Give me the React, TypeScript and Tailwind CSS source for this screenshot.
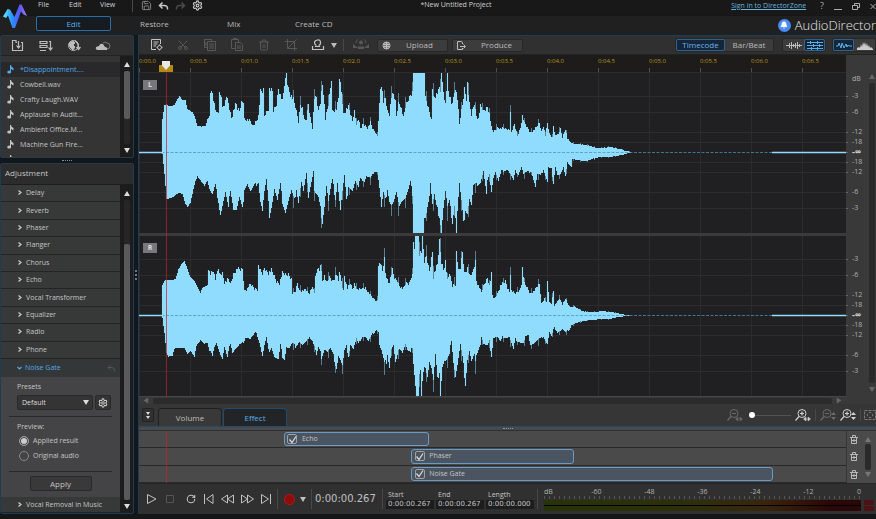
import type { ReactNode } from "react";
import { Bell, RotateCw, Save, Scissors, Settings, Trash2 } from "lucide-react";

const files = ["*Disappointment....", "Cowbell.wav", "Crafty Laugh.WAV", "Applause in Audit...", "Ambient Office.M...", "Machine Gun Fire...", "Gunshot 2..."];
const effects = ["Delay", "Reverb", "Phaser", "Flanger", "Chorus", "Echo", "Vocal Transformer", "Equalizer", "Radio", "Phone"];
const times = ["0:00.0", "0:00.5", "0:01.0", "0:01.5", "0:02.0", "0:02.5", "0:03.0", "0:03.5", "0:04.0", "0:04.5", "0:05.0", "0:05.5", "0:06.0", "0:06.5"];
const levels = ["-60", "-48", "-36", "-24", "-12"];

// distance from the previous mark, then the label
const dbMarks: [number, string][] = [[23, "-3"], [16, "-6"], [20, "-12"], [10, "-18"], [10, "-∞"], [10, "-18"], [10, "-12"], [20, "-6"], [16, "-3"]];

// wave envelopes in a 707x160 box
const leftTop =
  "23,79 23,46 25,33 27,32 29,34 35,33 38,27 40,24 43,28 46,28 48,37 53,40 55,44 58,53 62,54 66,54 68,47 70,44 71,17 73,18 75,30 77,40 79,37 80,20 82,20 83,34 86,27 87,22 89,29 92,44 95,34 96,26 98,35 100,37 102,28 104,27 105,45 111,47 113,52 117,47 119,42 121,17 124,16 125,42 129,34 130,14 133,17 134,37 137,30 139,14 140,17 143,27 145,10 147,1 149,14 151,20 154,25 157,37 159,47 161,30 163,34 165,47 167,45 169,30 171,44 173,54 175,24 177,23 179,37 181,27 183,9 184,17 186,45 189,30 192,5 193,37 197,35 199,24 200,3 202,17 204,40 207,35 209,33 211,40 213,47 215,37 217,50 219,45 221,55 224,50 228,54 231,49 233,55 238,62 240,30 241,13 243,17 244,27 246,24 248,37 250,40 252,22 254,20 256,27 257,42 259,29 261,30 264,44 266,32 269,25 271,20 274,17 274,0 285,0 286,24 289,34 291,42 293,49 293,14 295,24 298,20 299,12 301,17 302,0 304,17 306,30 308,0 309,17 312,29 314,24 316,12 318,24 320,50 323,30 325,14 327,24 328,8 330,30 332,40 335,29 337,42 339,45 341,32 344,37 348,33 350,40 352,54 354,58 358,54 364,55 370,56 371,37 372,59 375,51 378,62 381,54 383,42 385,49 388,54 391,59 396,55 400,49 402,58 404,52 406,62 408,49 410,60 413,64 414,52 416,62 419,61 421,55 423,64 426,55 428,65 432,70 438,71 448,72 458,75 471,74 481,76 486,78 493,79";
const leftBottom =
  "23,81 25,100 27,125 29,125 34,123 39,119 43,120 46,130 48,133 51,129 53,120 56,107 58,103 61,107 65,112 68,107 71,120 73,124 76,114 79,130 81,143 84,130 86,122 89,138 91,117 94,137 97,139 100,127 103,139 105,117 108,112 111,120 115,114 119,110 121,130 123,140 125,120 127,109 130,144 133,130 135,117 138,130 141,114 143,130 146,141 149,130 152,120 155,130 157,117 159,130 162,110 164,120 167,102 169,124 171,114 174,99 175,120 179,127 183,150 185,134 187,114 189,130 193,109 196,127 198,110 201,139 203,120 205,104 207,130 209,114 213,119 216,110 219,117 221,105 225,110 227,104 231,107 235,99 238,99 240,117 242,137 244,122 246,130 248,117 250,129 252,134 254,132 257,122 259,134 262,129 266,127 268,122 271,112 274,127 274,160 284,160 286,144 290,124 291,111 293,134 295,124 297,137 300,144 302,159 304,137 306,120 308,137 310,132 313,150 315,134 317,159 318,140 320,112 322,130 324,154 326,137 328,142 330,127 332,134 334,115 338,112 341,110 344,99 347,124 348,110 350,104 352,119 354,105 356,100 359,109 362,99 368,97 371,102 374,109 376,99 379,102 382,95 384,102 388,100 392,99 394,107 396,115 398,102 401,104 404,97 408,110 409,95 412,96 414,114 416,94 418,102 421,102 424,95 426,105 428,90 432,94 433,86 439,88 448,88 454,86 461,84 471,84 479,83 486,81 493,79";
const rightTop =
  "23,80 23,49 25,45 36,44 39,34 42,29 45,26 47,31 49,37 51,42 55,46 58,52 61,57 63,52 68,50 69,35 71,36 74,33 76,42 79,31 80,37 83,36 85,46 89,42 91,47 94,37 98,31 101,33 103,32 105,54 107,53 111,47 115,52 118,53 119,29 121,34 123,37 125,31 129,36 132,33 135,39 137,44 140,46 143,36 147,38 149,37 152,42 153,57 156,54 158,46 160,54 166,53 170,57 173,49 175,56 176,41 178,31 180,34 181,26 183,44 185,39 187,46 190,40 193,44 197,37 199,44 200,34 202,44 204,54 205,39 208,52 211,46 213,52 215,47 218,53 226,51 229,56 233,61 237,65 239,61 239,27 241,26 243,34 245,21 246,36 249,46 251,41 253,33 255,41 258,44 260,49 264,52 266,47 270,46 272,39 274,37 274,3 275,14 276,0 279,0 280,16 282,14 283,0 285,24 287,19 290,34 293,14 294,39 298,27 300,4 302,24 304,32 306,24 308,44 310,36 313,49 316,47 317,14 319,34 321,31 323,14 325,36 328,31 330,39 333,36 336,24 337,44 340,51 342,56 344,49 348,41 350,49 352,37 353,59 355,62 358,57 361,49 366,44 368,51 370,55 371,37 372,54 376,57 380,54 382,47 383,31 385,47 388,51 391,57 395,54 398,49 400,47 402,67 405,62 407,66 408,44 410,66 412,67 414,54 415,69 420,62 423,68 426,62 429,69 432,71 435,70 442,75 453,76 464,75 478,77 486,79 494,80";
const rightBottom =
  "23,82 25,97 27,116 29,120 33,119 35,112 41,111 45,111 48,117 51,114 55,120 57,109 61,104 65,107 68,106 70,114 73,122 75,114 78,109 81,119 83,124 85,112 88,124 91,107 93,117 96,114 100,111 103,109 106,102 111,104 117,97 120,107 123,122 125,111 127,104 129,117 132,112 135,122 139,126 141,111 143,121 145,124 147,112 150,114 153,109 156,111 160,106 163,110 167,107 170,101 173,106 175,111 177,121 179,114 182,122 185,114 188,117 191,114 194,122 197,133 199,121 203,131 205,117 207,112 209,121 211,109 214,114 217,104 219,109 223,101 226,102 229,106 233,99 237,94 239,97 240,111 242,116 245,130 247,127 248,119 250,132 252,114 254,111 256,129 258,122 260,112 263,117 266,109 268,116 271,119 273,111 274,127 276,151 277,160 279,160 280,141 281,137 282,160 284,141 286,131 288,141 290,127 292,134 294,147 296,121 298,146 300,136 301,160 303,132 305,127 307,127 310,121 312,104 314,127 316,142 318,131 321,111 323,124 326,149 328,124 330,116 332,127 335,121 336,129 338,116 341,109 342,101 344,109 348,112 350,107 352,121 354,102 358,102 361,107 364,101 367,102 370,102 374,115 376,104 379,106 384,109 386,102 389,101 391,109 394,108 398,106 404,101 408,109 410,97 412,101 415,92 418,97 423,94 426,97 430,94 432,89 438,87 444,85 453,84 461,83 471,83 479,81 488,80 494,80";

const parse = (s: string) => s.split(" ").map((p) => p.split(",").map(Number));

function levelAt(pts: number[][], x: number) {
  const i = pts.findIndex((p) => p[0] > x);
  if (i < 1) return i === 0 ? pts[0][1] : 80;
  const [x0, y0] = pts[i - 1];
  const [x1, y1] = pts[i];
  return y0 + ((y1 - y0) * (x - x0)) / (x1 - x0);
}

// one bar per sample column, with thin peaks where the sound is loud
function buildWave(top: string, bottom: string) {
  const a = parse(top);
  const b = parse(bottom);
  let body = "";
  let peaks = "";
  for (let x = 23; x < 493; x++) {
    const hi = levelAt(a, x);
    const lo = levelAt(b, x);
    const amp = (lo - hi) / 110;
    const up = x > 70 && hi > 1 ? ((x * 37) % 11) * 0.5 * amp : 0;
    const down = x > 70 && lo < 159 ? ((x * 53) % 13) * 0.5 * amp : 0;
    body += `M${x + 0.5} ${Math.round(Math.max(0, hi + up - amp))}V${Math.round(Math.min(160, lo - down + amp))}`;
    if (x > 150 && (x * 29) % 7 === 0) {
      peaks += `M${x + 0.5} ${Math.round(Math.max(0, hi - 9 * amp))}V${Math.round(Math.min(160, lo + 9 * amp))}`;
    }
  }
  return { body, peaks };
}

const leftWave = buildWave(leftTop, leftBottom);
const rightWave = buildWave(rightTop, rightBottom);

type IconProps = { children: ReactNode; w?: number; h?: number; className?: string };

function Icon({ children, w = 14, h = 14, className = "" }: IconProps) {
  return (
    <svg width={w} height={h} viewBox={`0 0 ${w} ${h}`} fill="none" stroke="currentColor" strokeWidth="1" className={`shrink-0 ${className}`} aria-hidden="true">
      {children}
    </svg>
  );
}

const Caret = ({ up = false, className = "" }: { up?: boolean; className?: string }) => (
  <Icon w={6} h={5} className={className}>
    <path d={up ? "M3 0 6 5H0z" : "M0 0h6L3 5z"} fill="currentColor" stroke="none" />
  </Icon>
);

const Divider = ({ className = "" }: { className?: string }) => <span className={`h-3 w-px shrink-0 bg-[#484848] ${className}`} />;

function Logo() {
  return (
    <svg width="26" height="26" viewBox="0 0 26 26" aria-hidden="true">
      <defs>
        <linearGradient id="mark" x1="0" x2="1">
          <stop offset="0" stopColor="#5ff0f5" />
          <stop offset=".4" stopColor="#2a8cff" />
          <stop offset=".7" stopColor="#5a55f5" />
          <stop offset="1" stopColor="#a57cff" />
        </linearGradient>
      </defs>
      <path d="M1 14.500 5.500 7l2.500.5L12.500 15 17.500 2.500h2L25 14l-3.500-1.500-2.500-3L13 26h-2.500L6 13.500l-2 2.500z" fill="url(#mark)" />
    </svg>
  );
}

function Header() {
  return (
    <header className="flex h-[35px] shrink-0 overflow-hidden bg-[linear-gradient(#181818_15px,#0d0d0d_15px,#202020_16px)]">
      <div className="w-9 shrink-0 pl-0.5 pt-0.5">
        <Logo />
      </div>
      <div className="flex min-w-0 flex-1 flex-col">
        <div className="flex h-4 shrink-0">
          <div className="flex flex-1 items-start">
            <nav className="flex w-24 items-center text-[7px] leading-[10px] text-[#d0d0d0]">
              <button className="w-[31px] pl-0.5 text-left">File</button>
              <button className="w-[31px] pl-0.5 text-left">Edit</button>
              <button className="pl-0.5 text-left">View</button>
            </nav>
            <Divider className="h-2.5" />
            <div className="flex gap-1.5 pl-2 text-[#c8c8c8]">
              <button aria-label="Save"><Save size={11} strokeWidth={2} className="text-[#888]" /></button>
              <button aria-label="Undo"><Icon w={11} h={10}><path d="M2 4.500h4q4 0 3.500 4M4.500 1.500l-3 3 3 3" strokeWidth="1.500" /></Icon></button>
              <button aria-label="Redo" className="text-[#4a4a4a]"><Icon w={11} h={10}><path d="M9 4.500H5q-4 0-3.500 4M6.500 1.500l3 3-3 3" strokeWidth="1.500" /></Icon></button>
              <button aria-label="Settings"><Settings size={11} strokeWidth={2.5} /></button>
            </div>
          </div>
          <div className="text-[7px] leading-[10px] text-[#d0d0d0]">*New Untitled Project</div>
          <div className="flex flex-1 items-start justify-end gap-2.5 text-[#aaa]">
            <a href="#" className="mr-1 text-[7px] leading-[11px] text-[#69b1dc] underline">Sign in to DirectorZone</a>
            <button aria-label="Help" className="text-[9px] leading-3">?</button>
            <button aria-label="Minimize"><Icon w={8} h={12}><path d="M0 9.500h8" /></Icon></button>
            <button aria-label="Restore window"><Icon w={8} h={12}><path d="M2.500 5.500v-2h5v4h-2M.5 5.500h5v4h-5z" /></Icon></button>
            <button aria-label="Close"><Icon w={6} h={12}><path d="m.5 4 5 5m0-5-5 5" /></Icon></button>
          </div>
        </div>
        <div className="flex min-w-0 flex-1 items-start text-[8px] leading-4 text-[#bbb]">
          <button className="h-[15px] w-[75px] rounded-[2px] border border-[#2c6da6] bg-[#151b21] leading-[13px] text-[#55aee8]">Edit</button>
          <button className="w-[87px] pl-[29px] text-left">Restore</button>
          <button className="w-[68px] pl-[29px] text-left">Mix</button>
          <button className="pl-[29px] text-left">Create CD</button>
          <div className="ml-auto flex items-center gap-1">
            <span className="grid size-[13px] shrink-0 place-items-center rounded-full bg-[#4a8af0] text-white">
              <Bell size={8} fill="currentColor" />
            </span>
            <div className="text-[13px] font-light leading-[18px] text-[#e6e6e6]">AudioDirector</div>
          </div>
        </div>
      </div>
    </header>
  );
}

function VScroll({ children }: { children: ReactNode }) {
  return (
    <div className="flex w-[13px] shrink-0 flex-col items-center bg-[#1c1c1d] py-1 text-[#ddd]">
      <Caret up className="mt-0.5" />
      <div className="my-1 flex w-1.5 flex-1 flex-col rounded-[2px] bg-[#292525]">{children}</div>
      <Caret />
    </div>
  );
}

function MediaPanel() {
  return (
    <section className="flex h-[123px] shrink-0 flex-col overflow-hidden rounded-[2px] border border-[#203c55] bg-[#343435]">
      <div className="flex h-5 shrink-0 items-center gap-3.5 border-b border-[#222] bg-[#2f2f30] pl-2.5 text-[#bcbcbc]">
        <button aria-label="Import file"><Icon><path d="M6 3.500H5v-2H1.500v10h10v-8H10M7.500 2v6.500M5.500 6.500l2 2.500 2-2.500" strokeWidth="1.200" /></Icon></button>
        <button aria-label="Import list"><Icon><path d="M1 2.500h7v2H1zM1 6.500h7v2H1zM1 11.500h6M10 2.500h1.500V11M9.500 8.500l2 2.500 2-2.500" strokeWidth="1.200" /></Icon></button>
        <button aria-label="Download audio"><Icon><circle cx="6.500" cy="6.500" r="5" /><path d="M3 3.500 6 2l2 2-2 2 2 2-2 3-3-3-1-3z" fill="currentColor" /><path d="M8 2q3.500 1 3.500 8M9.500 8l2 2.500 2-2.500" strokeWidth="1.400" /></Icon></button>
        <button aria-label="Cloud"><Icon w={16} h={12}><path d="M8 3q2-2 4 0 3 0 3 3t-3 3" stroke="#777" /><path d="M2 10q-2-1-1-3l3-1q1-3 4-2l2 3q3 0 2 3z" fill="currentColor" stroke="none" /></Icon></button>
      </div>
      <div className="flex min-h-0 flex-1">
        <ul className="min-w-0 flex-1 overflow-hidden pt-1.5 text-[7px] leading-[15px] text-[#c4c4c4]">
          {files.map((f, i) => (
            <li key={f} className={i === 0 ? "bg-[#29292b]" : ""}>
              <button className="flex h-[15px] items-center gap-1.5 whitespace-nowrap pl-1.5">
                <Icon w={7} h={9} className={i === 0 ? "text-[#52a9e5]" : ""}>
                  <path d="M3 0h1q0 2 2.500 3v2.500L4 4v3H3z" fill="currentColor" stroke="none" />
                  <ellipse cx="2.200" cy="7" rx="2" ry="1.600" fill="currentColor" stroke="none" />
                </Icon>
                <span className={i === 0 ? "text-[#52a9e5]" : ""}>{f}</span>
              </button>
            </li>
          ))}
        </ul>
        <VScroll>
          <div className="h-12 rounded-[2px] bg-[#5a5a5d]" />
        </VScroll>
      </div>
    </section>
  );
}

function EffectRow({ name }: { name: string }) {
  return (
    <button className="flex min-h-0 flex-1 items-center gap-1 border-b border-[#232525] bg-[#373939] pl-[17px] text-left">
      <Icon w={4} h={6} className="text-[#ccc]"><path d="m.5.5 2.500 2-2.500 2" strokeWidth="1.200" /></Icon>
      <span>{name}</span>
    </button>
  );
}

function AdjustmentPanel() {
  return (
    <section className="flex min-h-0 flex-1 flex-col overflow-hidden rounded-[2px] border border-[#203c55] bg-[#2c2c2d]">
      <h2 className="h-[21px] shrink-0 border-b border-[#1d1d1d] pl-1 text-[8px] leading-[18px] text-[#c4c4c4]">Adjustment</h2>
      <div className="flex min-h-0 flex-1 text-[7px] leading-[10px] text-[#c4c4c4]">
        <div className="flex min-w-0 flex-1 flex-col">
          <div className="flex min-h-0 flex-1 flex-col">{effects.map((e) => <EffectRow key={e} name={e} />)}</div>
          <button className="flex h-[18px] shrink-0 items-center gap-[3px] bg-[#343737] pl-4 pr-1 text-[#52a9e5]">
            <Icon w={5} h={5}><path d="m.5 1 2 2 2-2" strokeWidth="1.200" /></Icon>
            <span>Noise Gate</span>
            <Icon w={9} h={8} className="ml-auto text-[#555]"><path d="M1 3.500h4q3 0 2.500 4M3.500 1 1 3.500 3.500 6" /></Icon>
          </button>
          <div className="flex h-[120px] shrink-0 flex-col bg-[#444446] px-2">
            <label htmlFor="preset" className="pl-2 pt-[5px]">Presets</label>
            <div className="mt-[3px] flex gap-0.5 pl-2">
              <div className="grid w-[76px] items-center">
                <select id="preset" className="h-[15px] w-full appearance-none rounded-[2px] border border-[#29292a] bg-[#343435] pl-1 text-[7px] leading-3 text-[#ddd] [grid-area:1/1]">
                  <option>Default</option>
                </select>
                <Caret className="pointer-events-none mr-1 justify-self-end text-[#ddd] [grid-area:1/1]" />
              </div>
              <button aria-label="Preset options" className="grid h-[15px] w-4 place-items-center rounded-[2px] border border-[#29292a] bg-[#343435] text-[#ccc]">
                <Settings size={10} strokeWidth={2.5} />
              </button>
            </div>
            <fieldset className="mt-1.5 border-y border-[#29292a] pb-2 pl-2 pt-1">
              <legend className="float-left w-full leading-3">Preview:</legend>
              <label className="flex h-[15px] w-full items-center gap-1">
                <input type="radio" name="preview" defaultChecked className="ml-0.5 size-2.5 appearance-none rounded-full border border-[#999] checked:bg-[#ccc] checked:shadow-[inset_0_0_0_1px_#444]" />
                Applied result
              </label>
              <label className="flex h-[15px] items-center gap-1">
                <input type="radio" name="preview" className="ml-0.5 size-2.5 appearance-none rounded-full border border-[#888] checked:bg-[#ccc]" />
                Original audio
              </label>
            </fieldset>
            <button className="mt-1 h-[15px] w-[62px] self-center rounded-[2px] border border-[#29292a] bg-[#39393a] text-[8px] leading-3 text-[#c4c4c4]">Apply</button>
          </div>
          <div className="flex h-4 shrink-0"><EffectRow name="Vocal Removal in Music" /></div>
        </div>
        <VScroll>
          <div className="mt-[44px] flex-1 rounded-[2px] bg-[#5a5a5d]" />
        </VScroll>
      </div>
    </section>
  );
}

function ToolButton({ label, children, off = false, className = "" }: { label: string; children: ReactNode; off?: boolean; className?: string }) {
  return (
    <button aria-label={label} className={`grid w-[27px] shrink-0 place-items-center ${off ? "text-[#585858]" : "text-[#c4c4c4]"} ${className}`}>
      {children}
    </button>
  );
}

function Toolbar() {
  return (
    <div className="flex h-[19px] shrink-0 items-center border-b border-[#222] bg-[#303031] pl-[3px] text-[8px] text-[#bbb]">
      <ToolButton label="Properties"><Icon><path d="M11.500 6V1.500h-9v10H7M4.500 4h5M4.500 6h4M4.500 8H7" /><circle cx="10.500" cy="9.500" r="2" /><path d="M10.500 6.500v1m0 4v1m-3-3h1m4 0h1" /></Icon></ToolButton>
      <ToolButton label="Cut" off><Scissors size={12} className="-rotate-90" /></ToolButton>
      <ToolButton label="Copy" off><Icon><path d="M4.500 9.500h-3v-8h7v2M4.500 3.500h8v9h-8zM6 6h5M6 8h5M6 10h5M3 4v4" /></Icon></ToolButton>
      <ToolButton label="Paste" off><Icon><path d="M5.500 10.500h-4v-9h7v3M3.500 1V.5h3V1M5.500 4.500h5l2 2v6h-7zM7 8h4M7 10h4" /></Icon></ToolButton>
      <ToolButton label="Delete" off><Trash2 size={12} /></ToolButton>
      <ToolButton label="Trim" off><Icon><path d="M3.500 1v9.500H13M1 3.500h9.500V13M12.500 1.500l-9 9" /></Icon></ToolButton>
      <ToolButton label="Marker"><Icon><path d="M5.500 7.500q-2-1-2-3t3-2.500 3 2.500-2 3M1.500 8v3.500h11V8M4 8.500h5" strokeWidth="1.200" /></Icon></ToolButton>
      <Caret className="mr-1.5" />
      <Divider />
      <ToolButton label="Mix sources" off className="w-[33px]"><Icon w={16}><path d="M0 6l5 4H0zm16 0-5 4h5zM5 11V8.500h6V11z" fill="currentColor" stroke="none" /><circle cx="8" cy="4.500" r="2" fill="currentColor" stroke="none" /><path d="M3 5q0-3 2-3.500m8 3.500q0-3-2-3.500" /></Icon></ToolButton>
      <button className="flex h-[13px] w-[71px] items-center gap-[15px] rounded-[2px] border border-[#272727] bg-[#3c3c3d] pl-1">
        <Icon w={9} h={9}><circle cx="4.500" cy="4.500" r="3.500" /><path d="M1 3.500h7m-7 2h7M4.500 1v7M3 1v7m3-7v7" /></Icon>
        Upload
      </button>
      <button className="ml-1 flex h-[13px] w-[71px] items-center gap-[15px] rounded-[2px] border border-[#272727] bg-[#3c3c3d] pl-1">
        <Icon w={9} h={9}><path d="M5.500 3V1.500L4 .500H.5v8h5V7M3 5.500h5M6.500 3.500l2 2-2 2" /></Icon>
        Produce
      </button>
      <div className="ml-auto flex h-[14px] shrink-0 rounded-[2px] border border-[#272727] bg-[#3c3c3d]">
        <button className="w-[49px] rounded-[2px] border border-[#2b6491] bg-[#14273a] leading-[10px] text-[#6db2e2]">Timecode</button>
        <button className="w-12 leading-3">Bar/Beat</button>
      </div>
      <div className="ml-2 flex h-[14px] shrink-0 rounded-[2px] border border-[#272727] bg-[#3c3c3d]">
        <button aria-label="Waveform" className="grid w-[21px] place-items-center"><Icon w={16} h={9}><path d="M0 4.500h16M3.500 2v5m2-6v7m2-5v3m2-4v5m2-6v7m2-5v3" /></Icon></button>
        <button aria-label="Spectrum" className="grid w-[21px] place-items-center rounded-[2px] border border-[#2b6491] bg-[#14273a] text-[#5caee6]"><Icon w={16} h={10}><path d="M0 2.500h16M0 5.500h16M0 8.500h16M3.500 1v3m7-3v3m-4 0v3m6-3v3m-8 0v3m6-3v3" /></Icon></button>
      </div>
      <div className="ml-1.5 flex h-[14px] shrink-0 rounded-[2px] border border-[#272727] bg-[#3c3c3d]">
        <button aria-label="Line view" className="grid w-[21px] place-items-center rounded-[2px] border border-[#2b6491] bg-[#14273a] text-[#5caee6]"><Icon w={16} h={9}><path d="M0 5h2l1-3 2 5 1-5 2 5 2-4 1 3 1-2 1 1h3" /></Icon></button>
        <button aria-label="Histogram view" className="grid w-[21px] place-items-center text-[#ccc]"><Icon w={16} h={9}><path d="M0 9V7l2-1 1 1 1-4 1 3 1-5 1 3 1-3 1 4 1-3 1 4 1-2 1 3 1-1 2 2v1z" fill="currentColor" stroke="none" /></Icon></button>
      </div>
    </div>
  );
}

function Ruler() {
  return (
    <div className="relative flex h-[17px] shrink-0 bg-[#1d1c1a] pt-px text-[6px] leading-[11px] text-[#b8941a]">
      {times.map((t, i) => (
        <div key={t} className={`flex min-w-0 flex-col justify-between whitespace-nowrap ${i === 13 ? "flex-[44]" : "flex-[51]"}`}>
          <span>{t}</span>
          <span className="h-1 w-px bg-[#505050]" />
        </div>
      ))}
      <svg width="14" height="11" viewBox="0 0 14 11" className="absolute bottom-0 left-[3.820%] -translate-x-1/2" aria-hidden="true">
        <path d="M0 4h14v7H0z" fill="#b58a14" />
        <path d="M3 0h8v4.500L7 9 3 4.500z" fill="#e8e8e8" />
      </svg>
    </div>
  );
}

function Channel({ name, wave }: { name: string; wave: { body: string; peaks: string } }) {
  return (
    <div className="relative min-h-0 flex-1 bg-[#202022]">
      <svg className="absolute inset-0 size-full" viewBox="0 0 707 160" preserveAspectRatio="none" aria-label={`Channel ${name}`}>
        <g stroke="#2c2c2d" strokeWidth="1">
          {times.map((t, i) => <path key={t} d={`M${i * 51 + 0.5} 0v160`} />)}
          {[23, 39, 59, 69, 89, 99, 119, 135].map((y) => <path key={y} d={`M0 ${y + 0.5}h707`} />)}
        </g>
        <path d={wave.peaks} stroke="#8fdcff" strokeWidth="1" opacity=".5" />
        <path d={wave.body} stroke="#8fdcff" strokeWidth="1.100" />
        <path d="M0 79.500h707" stroke="#4a94b8" strokeWidth="1" strokeDasharray="3 1.500" opacity=".75" />
        <path d="M0 79.500h24M633 79.500h74" stroke="#8fdcff" strokeWidth="1.400" />
      </svg>
      <span className="absolute left-1 top-[7px] h-2.5 w-[14px] bg-[#77777c] text-center text-[7px] font-bold leading-[10px] text-[#ddd]">{name}</span>
    </div>
  );
}

function DbScale({ unit = false }: { unit?: boolean }) {
  return (
    <div className="flex min-h-0 flex-1 flex-col text-[7px] leading-[8px] text-[#b0b0b0]">
      {unit && (
        <>
          <span className="flex-[6]" />
          <span className="flex h-0 items-center pl-1.5">dB</span>
        </>
      )}
      {dbMarks.map(([gap, label], i) => (
        <div key={i} className="flex flex-col justify-end" style={{ flexGrow: unit && i === 0 ? gap - 6 : gap, flexBasis: 0 }}>
          <div className="flex h-0 items-center gap-1">
            <span className="h-px w-0.5 bg-[#666]" />
            <span className={label === "-∞" ? "text-[9px] font-bold text-[#d0d0d0]" : ""}>{label}</span>
          </div>
        </div>
      ))}
      <span className="flex-[25]" />
    </div>
  );
}

function Waveforms() {
  return (
    <div className="flex min-h-0 flex-1">
      <div className="flex min-w-0 flex-1 flex-col">
        <Ruler />
        <div className="relative flex min-h-0 flex-1 flex-col gap-[3px] border-t border-[#2c2c2c] bg-[#3b3b3b]">
          <Channel name="L" wave={leftWave} />
          <Channel name="R" wave={rightWave} />
          <span className="absolute inset-y-0 left-[3.820%] w-px bg-[#c02028]/70" />
        </div>
        <div className="flex h-2 shrink-0 items-center gap-1 border-t border-[#464646] px-1 text-[#666]">
          <Caret className="rotate-90" />
          <span className="h-1.5 flex-1 rounded-[2px] bg-[#2b2b2b]" />
          <Caret className="-rotate-90" />
        </div>
      </div>
      <div className="flex w-[21px] shrink-0 flex-col gap-[3px] pb-2 pt-[18px]">
        <DbScale unit />
        <DbScale />
      </div>
      <div className="flex w-[9px] shrink-0 flex-col items-center gap-1 pb-3 pt-[19px] text-[#666]">
        <Caret up />
        <span className="w-1.5 flex-1 rounded-[2px] bg-[#2a2a2a]" />
        <Caret />
      </div>
    </div>
  );
}

function Magnifier({ minus = false, vertical = false, className = "" }: { minus?: boolean; vertical?: boolean; className?: string }) {
  return (
    <Icon w={16} className={className}>
      <circle cx="7" cy="5.500" r="4" />
      <path d={minus ? "M5 5.500h4M4 8.500l-3.500 4" : "M5 5.500h4m-2-2v4M4 8.500l-3.500 4"} strokeWidth="1.200" />
      <path d={vertical ? "M13.500 4 16 7h-5zM13.500 12 16 9h-5z" : "M11 9v4l-2.500-2zM13 9v4l2.500-2zM11 11h2"} fill="currentColor" stroke={vertical ? "none" : "currentColor"} strokeWidth=".5" />
    </Icon>
  );
}

function TabBar() {
  return (
    <div className="flex h-[23px] shrink-0 items-center border-b border-[#244a6c] bg-[#363637] text-[#bbb]">
      <button aria-label="Collapse" className="ml-[3px] grid h-[14px] w-3 place-items-center rounded-[2px] border border-[#222] bg-[#303031] text-[#ddd]">
        <Icon w={6} h={9}><path d="M1 1h4L3 4zm0 4h4L3 8z" fill="currentColor" stroke="none" /></Icon>
      </button>
      <div className="flex gap-px self-stretch pl-1 pt-1 text-[8px] leading-[17px]">
        <button className="w-16 rounded-t-[4px] border border-b-0 border-[#202020] bg-[#39393a]">Volume</button>
        <button className="w-16 rounded-t-[4px] border border-b-0 border-[#244a6c] bg-[#222528] text-[#55aee8]">Effect</button>
      </div>
      <div className="ml-auto flex shrink-0 items-center">
        <button aria-label="Zoom out"><Magnifier minus className="text-[#6a6a6a]" /></button>
        <input
          type="range"
          aria-label="Zoom"
          min={0}
          max={100}
          defaultValue={0}
          className="ml-1.5 mr-1 h-3 w-[42px] appearance-none bg-[linear-gradient(#525252,#525252)] bg-[length:100%_1px] bg-center bg-no-repeat [&::-webkit-slider-thumb]:size-1.5 [&::-webkit-slider-thumb]:appearance-none [&::-webkit-slider-thumb]:rounded-full [&::-webkit-slider-thumb]:bg-white"
        />
        <button aria-label="Zoom in"><Magnifier className="text-[#d0d0d0]" /></button>
        <Divider className="mx-1" />
        <button aria-label="Zoom out vertically"><Magnifier minus vertical className="text-[#6a6a6a]" /></button>
        <button aria-label="Zoom in vertically" className="ml-1"><Magnifier vertical className="text-[#d0d0d0]" /></button>
        <Divider className="ml-1 mr-[3px]" />
        <button aria-label="Fit" className="text-[#777]"><Icon w={12}><path d="M.5 2.500h11v9H.5z" strokeDasharray="3 1" /><path d="M4 5.500v3L2.500 7zm4 0v3L9.500 7zM4.500 5h3L6 3.500zm0 4h3L6 10.500z" fill="currentColor" stroke="none" /></Icon></button>
      </div>
    </div>
  );
}

const Trash = () => (
  <Icon w={8} h={9} className="text-[#b8b8b8]">
    <path d="M0 2.500h8M2.500 2V.5h3V2M1.500 3v5.500h5V3M4 4v3M1.500 5.500h5" />
  </Icon>
);

function Track({ name, className }: { name: string; className: string }) {
  return (
    <div className="flex min-h-0 flex-1 border-b border-[#29292a] py-px">
      <label className={`flex items-center gap-1 rounded-[3px] border border-[#6b9bc4] bg-[#4b5461] pl-0.5 text-[7px] leading-[10px] text-[#c4c4c4] ${className}`}>
        <span className="grid size-[11px] place-items-center">
          <input type="checkbox" defaultChecked className="size-2.5 appearance-none rounded-[2px] border border-[#a0a0a0] [grid-area:1/1]" />
          <Icon w={9} h={9} className="pointer-events-none text-[#d8d8d8] [grid-area:1/1]"><path d="m1.500 4.500 2.500 3 4-6" strokeWidth="1.300" /></Icon>
        </span>
        {name}
      </label>
    </div>
  );
}

function EffectTracks() {
  return (
    <div className="shrink-0 bg-[#4a4a4b]">
      <div className="flex h-1 items-center justify-center border-b border-[#303030]">
        <span className="w-2.5 border-t border-dotted border-[#999]" />
      </div>
      <div className="flex h-[52px]">
        <div className="relative flex min-w-0 flex-1 flex-col">
          <Track name="Echo" className="ml-[20.500%] w-[20.500%]" />
          <Track name="Phaser" className="ml-[38.500%] w-[23%]" />
          <Track name="Noise Gate" className="ml-[38.500%] w-[51.200%]" />
          <span className="absolute inset-y-0 left-[3.820%] w-px bg-[#c02028]/80" />
        </div>
        <div className="flex w-[14px] shrink-0 flex-col border-l border-[#363636]">
          {["Echo", "Phaser", "Noise Gate"].map((n) => (
            <button key={n} aria-label={`Remove ${n}`} className="grid flex-1 place-items-center"><Trash /></button>
          ))}
        </div>
        <div className="flex w-4 shrink-0 flex-col items-center gap-0.5 py-1.5 text-[#777]">
          <Caret up />
          <span className="w-1.5 flex-1 rounded-[2px] bg-[#2a2a2a]" />
          <Caret />
        </div>
      </div>
    </div>
  );
}

function TimeField({ label, value }: { label: string; value: string }) {
  return (
    <label className="flex w-12 shrink-0 flex-col text-[7px] leading-[10px] text-[#c4c4c4]">
      <span className="pl-0.5">{label}</span>
      <input defaultValue={value} className="h-[9px] w-full bg-[#1d1d1e] pl-0.5 font-['DejaVu_Sans'] text-[7px] leading-[9px] text-[#c4c4c4]" />
    </label>
  );
}

function Meter() {
  return (
    <div className="flex min-w-0 flex-1 items-end gap-[3px] pl-1.5 pr-0.5">
      <div className="min-w-0 flex-1">
        <div className="flex text-[7px] leading-[9px] text-[#b0b0b0]">
          <span className="flex-[26]">dB</span>
          {levels.map((l) => <span key={l} className="flex-[53] text-center">{l}</span>)}
          <span className="flex-[26] text-right">0</span>
        </div>
        <div className="mb-px h-[3px] bg-[repeating-linear-gradient(90deg,#555_0_1px,transparent_1px_5px)]" />
        <div className="flex flex-col gap-px bg-black">
          <span className="h-[5px] bg-[linear-gradient(90deg,#273309,#2d300a_45%,#39250c_70%,#2b0808_90%)]" />
          <span className="h-[5px] bg-[linear-gradient(90deg,#273309,#2d300a_45%,#39250c_70%,#2b0808_90%)]" />
        </div>
      </div>
      <div className="flex w-2.5 flex-col gap-px">
        <span className="h-[5px] bg-[#4d1216]" />
        <span className="h-[5px] bg-[#4d1216]" />
      </div>
    </div>
  );
}

function Transport() {
  return (
    <div className="flex h-[31px] shrink-0 items-center border-t border-[#262626] bg-[#303031] text-[#c0c0c0]">
      <div className="flex items-center gap-[7px] pl-2">
        <button aria-label="Play"><Icon w={10} h={12}><path d="M.5 1.500 9 6 .5 10.500z" /></Icon></button>
        <button aria-label="Stop" className="ml-px text-[#555]"><Icon w={10} h={12}><path d="M1.500 2.500h7v7h-7z" /></Icon></button>
        <button aria-label="Loop" className="ml-1"><RotateCw size={10} strokeWidth={2.5} /></button>
        <button aria-label="Previous"><Icon w={11} h={12}><path d="M1.500 1v10M10 1.500 3.500 6l6.500 4.500z" /></Icon></button>
        <button aria-label="Rewind"><Icon w={13} h={12}><path d="M6.500 2 .5 6l6 4zm6 0-6 4 6 4z" /></Icon></button>
        <button aria-label="Fast forward"><Icon w={13} h={12}><path d="m.5 2 6 4-6 4zm6 0 6 4-6 4z" /></Icon></button>
        <button aria-label="Next"><Icon w={10} h={12}><path d="M9.500 1v10M.5 1.500 7.500 6l-7 4.500z" /></Icon></button>
      </div>
      <Divider className="ml-1.5 h-5" />
      <button aria-label="Record" className="ml-1.5 size-[11px] rounded-full border border-[#c01313] bg-[#8b0d0d]" />
      <Caret className="mx-[5px]" />
      <Divider className="h-5" />
      <output className="w-[70px] pl-[3px] font-['DejaVu_Sans'] text-[10px] leading-4">0:00:00.267</output>
      <Divider className="mr-[3px] h-5" />
      <div className="flex gap-0.5">
        <TimeField label="Start" value="0:00:00.267" />
        <TimeField label="End" value="0:00:00.267" />
        <TimeField label="Length" value="0:00:00.000" />
      </div>
      <Divider className="ml-[3px] h-5" />
      <Meter />
    </div>
  );
}

export default function App() {
  return (
    <div className="flex h-screen flex-col overflow-hidden bg-[#151618] pb-[5px] font-['Open_Sans','Noto_Sans',sans-serif]">
      <Header />
      <main className="flex min-h-0 flex-1">
        <aside className="flex w-[134px] shrink-0 flex-col">
          <MediaPanel />
          <div className="flex h-[5px] shrink-0 items-center justify-center">
            <span className="w-2.5 border-t border-dotted border-[#888]" />
          </div>
          <AdjustmentPanel />
        </aside>
        <div className="flex w-1 shrink-0 items-center justify-center bg-[#11171d]">
          <span className="h-2.5 border-l-2 border-dotted border-[#777]" />
        </div>
        <section className="flex min-w-0 flex-1 flex-col border-l border-t border-[#203c55] bg-[#393939]">
          <Toolbar />
          <Waveforms />
          <TabBar />
          <EffectTracks />
          <Transport />
        </section>
      </main>
    </div>
  );
}
